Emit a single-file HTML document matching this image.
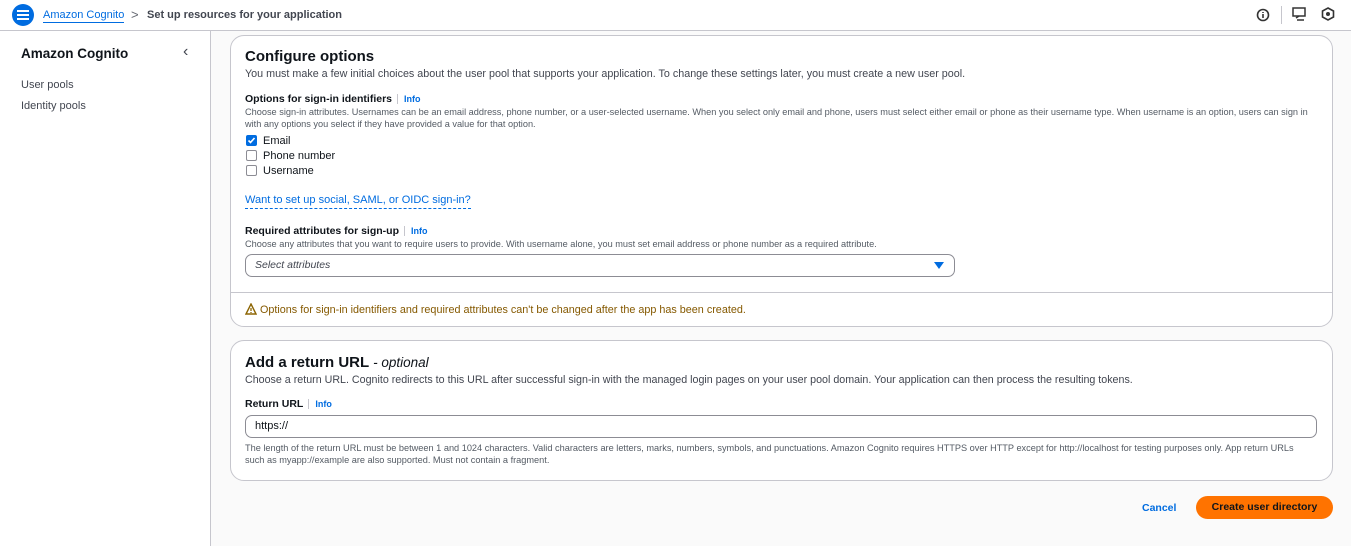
<!DOCTYPE html>
<html><head><meta charset="utf-8"><style>
*{box-sizing:border-box;margin:0;padding:0}
body{width:1351px;height:546px;overflow:hidden;background:#fafafa;font-family:"Liberation Sans",Arial,sans-serif;color:#0f141a;position:relative}
.a{position:absolute;white-space:nowrap}
.hdr{position:absolute;left:0;top:0;width:1351px;height:31px;background:#fff;border-bottom:1px solid #c6c6cd}
.side{position:absolute;left:0;top:31px;width:211px;height:515px;background:#fff;border-right:1px solid #c6c6cd}
.panel{position:absolute;left:230px;width:1103px;background:#fff;border:1px solid #c6c6cd;border-radius:14px}
.info{color:#006ce0;font-weight:bold;font-size:9px;border-left:1px solid #c6c6cd;padding-left:6px;margin-left:5px}
.cb{position:absolute;width:11px;height:11px;border:1px solid #8c8c94;border-radius:2px;background:#fff}
.s10{font-size:9.2px;color:#545b64}
</style></head><body>
<div class="hdr"></div>
<div class="a" style="left:12px;top:4px;width:22px;height:22px;border-radius:50%;background:#006ce0"></div>
<div class="a" style="left:17px;top:10px;width:12px;height:2px;background:#fff;box-shadow:0 4px 0 #fff,0 8px 0 #fff"></div>
<div class="a" style="left:43px;top:8px;font-size:11px;border-bottom:1px solid #006ce0;color:#006ce0;line-height:14px">Amazon Cognito</div>
<div class="a" style="left:131px;top:7px;font-size:13px;color:#656871">&gt;</div>
<div class="a" style="left:147px;top:9px;font-size:11px;font-weight:bold;color:#424650">Set up resources for your application</div>
<svg class="a" style="left:1256px;top:8px" width="14" height="14"><circle cx="7" cy="7" r="5.5" fill="none" stroke="#333" stroke-width="1.6"/><path d="M7 6v4M7 4v1" stroke="#333" stroke-width="1.6"/></svg>
<div class="a" style="left:1281px;top:6px;width:1px;height:18px;background:#c6c6cd"></div>
<svg class="a" style="left:1292px;top:7px" width="14" height="14"><rect x="1" y="1" width="12" height="8" fill="none" stroke="#333" stroke-width="1.5"/><path d="M4 11l3 -2M5 13h7" stroke="#333" stroke-width="1.5"/></svg>
<svg class="a" style="left:1321px;top:7px" width="14" height="14"><path d="M7 1l5.5 3v6L7 13 1.5 10V4z" fill="none" stroke="#333" stroke-width="1.6"/><circle cx="7" cy="7" r="2" fill="#333"/></svg>

<div class="side"></div>
<div class="a" style="left:21px;top:46px;font-size:13.5px;font-weight:bold">Amazon Cognito</div>
<div class="a" style="left:183px;top:43px;font-size:16px;color:#424650">&#8249;</div>
<div class="a" style="left:21px;top:79px;font-size:11px;color:#424650">User pools</div>
<div class="a" style="left:21px;top:100px;font-size:11px;color:#424650">Identity pools</div>

<div class="panel" style="top:35px;height:292px"></div>
<div class="a" style="left:245px;top:48px;font-size:15px;font-weight:bold">Configure options</div>
<div class="a" style="left:245px;top:68px;font-size:10.75px;color:#424650">You must make a few initial choices about the user pool that supports your application. To change these settings later, you must create a new user pool.</div>
<div class="a" style="left:245px;top:93px;font-size:10.5px;font-weight:bold">Options for sign-in identifiers<span class="info">Info</span></div>
<div class="a s10" style="left:245px;top:107px">Choose sign-in attributes. Usernames can be an email address, phone number, or a user-selected username. When you select only email and phone, users must select either email or phone as their username type. When username is an option, users can sign in</div>
<div class="a s10" style="left:245px;top:119px">with any options you select if they have provided a value for that option.</div>
<div class="cb" style="left:246px;top:135px;background:#006ce0;border-color:#006ce0"></div>
<svg class="a" style="left:246px;top:135px" width="11" height="11"><path d="M2.5 5.5l2 2 4-4.5" fill="none" stroke="#fff" stroke-width="1.6"/></svg>
<div class="cb" style="left:246px;top:150px"></div>
<div class="cb" style="left:246px;top:165px"></div>
<div class="a" style="left:263px;top:135px;font-size:11px">Email</div>
<div class="a" style="left:263px;top:150px;font-size:11px">Phone number</div>
<div class="a" style="left:263px;top:165px;font-size:11px">Username</div>
<div class="a" style="left:245px;top:193px;font-size:11px;color:#006ce0;border-bottom:1px dashed #006ce0;line-height:15px">Want to set up social, SAML, or OIDC sign-in?</div>
<div class="a" style="left:245px;top:225px;font-size:10.5px;font-weight:bold">Required attributes for sign-up<span class="info">Info</span></div>
<div class="a s10" style="left:245px;top:239px">Choose any attributes that you want to require users to provide. With username alone, you must set email address or phone number as a required attribute.</div>
<div class="a" style="left:245px;top:254px;width:710px;height:23px;border:1px solid #8c8c94;border-radius:7px;background:#fff"></div>
<div class="a" style="left:255px;top:259px;font-size:10.5px;font-style:italic;color:#424650">Select attributes</div>
<svg class="a" style="left:934px;top:262px" width="10" height="7"><path d="M0 0h10L5 7z" fill="#006ce0"/></svg>
<div class="a" style="left:231px;top:292px;width:1101px;height:1px;background:#c6c6cd"></div>
<svg class="a" style="left:245px;top:303px" width="12" height="12"><path d="M6 1L11 11H1z" fill="none" stroke="#8d6605" stroke-width="1.4"/><path d="M6 5v3M6 9v1" stroke="#8d6605" stroke-width="1.3"/></svg>
<div class="a" style="left:260px;top:304px;font-size:10.8px;color:#855900">Options for sign-in identifiers and required attributes can't be changed after the app has been created.</div>

<div class="panel" style="top:340px;height:141px"></div>
<div class="a" style="left:245px;top:354px;font-size:15px;font-weight:bold">Add a return URL <span style="font-weight:normal;font-style:italic;font-size:13.5px">- optional</span></div>
<div class="a" style="left:245px;top:374px;font-size:10.7px;color:#424650">Choose a return URL. Cognito redirects to this URL after successful sign-in with the managed login pages on your user pool domain. Your application can then process the resulting tokens.</div>
<div class="a" style="left:245px;top:398px;font-size:10.5px;font-weight:bold">Return URL<span class="info">Info</span></div>
<div class="a" style="left:245px;top:415px;width:1072px;height:23px;border:1px solid #8c8c94;border-radius:7px;background:#fff"></div>
<div class="a" style="left:255px;top:420px;font-size:11px">https://</div>
<div class="a s10" style="left:245px;top:443px">The length of the return URL must be between 1 and 1024 characters. Valid characters are letters, marks, numbers, symbols, and punctuations. Amazon Cognito requires HTTPS over HTTP except for http://localhost for testing purposes only. App return URLs</div>
<div class="a s10" style="left:245px;top:455px">such as myapp://example are also supported. Must not contain a fragment.</div>

<div class="a" style="left:1142px;top:502px;font-size:10.5px;font-weight:bold;color:#006ce0">Cancel</div>
<div class="a" style="left:1196px;top:496px;width:137px;height:23px;border-radius:12px;background:#ff7300;font-size:10.5px;font-weight:bold;text-align:center;line-height:23px">Create user directory</div>
</body></html>
